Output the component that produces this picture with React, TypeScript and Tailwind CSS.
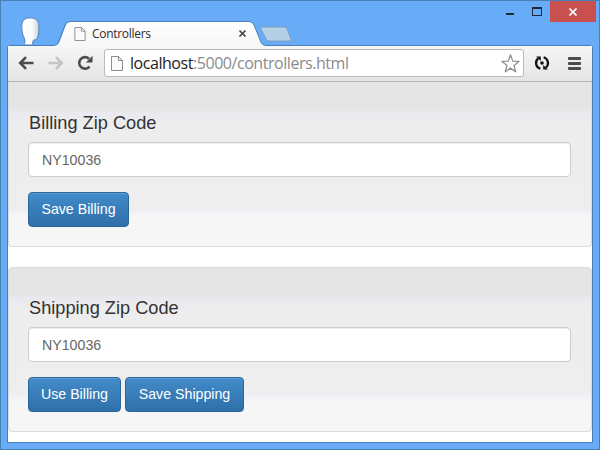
import React from "react";

function PageIcon({ className }: { className: string }) {
  return (
    <svg className={className} viewBox="0 0 12 15" fill="#fbfbfb" stroke="#8b8b8b" strokeWidth="1">
      <path d="M.5 .5H7.5L11.5 4.5V14.5H.5Z" />
      <path d="M7.5 .5V4.5H11.5" fill="none" />
    </svg>
  );
}

function TitleBar() {
  return (
    <div className="relative h-[44px] shrink-0">
      <svg className="absolute left-0 -top-px" width="600" height="46" viewBox="0 0 600 46">
        <defs>
          <linearGradient id="tab" x1="0" y1="0" x2="0" y2="1">
            <stop offset="0" stopColor="#ffffff" />
            <stop offset="1" stopColor="#f6f6f6" />
          </linearGradient>
          <linearGradient id="head" x1="0" y1="0" x2="1" y2="0">
            <stop offset="0" stopColor="#ffffff" />
            <stop offset=".6" stopColor="#fafcfd" />
            <stop offset="1" stopColor="#c9d3db" />
          </linearGradient>
        </defs>
        <path
          d="M24 45C25 43 25.200 40.500 24.500 38.500C22.500 35 21.800 31 21.800 27C21.500 21 24.500 17.800 30 17.800C36.500 17.800 39 21.500 39 27C39 32 38.500 35 37.500 37.500C36.800 39.500 35.500 40 33.800 40C32.500 40.500 32.500 42.500 33 45Z"
          fill="url(#head)"
          stroke="#5585b8"
          strokeWidth="1"
        />
        <path
          d="M261.500 27H284Q286 27 287 29L291 39Q291.500 41 289.500 41H269Q267 41 266 39L261 29Q260.500 27 261.500 27Z"
          fill="#b3d0e7"
          stroke="#7d9fc0"
          strokeWidth="1"
        />
        <path
          d="M8 46H54Q58 45.500 59.500 42L66 25Q67.500 21.500 71 21.500H249Q252.500 21.500 254 25L260.500 41Q262 45.500 266 46"
          fill="url(#tab)"
        />
        <path
          d="M9 45.500H54Q57 45.500 58.500 42L65 25Q66.500 21.500 70 21.500H249Q252.500 21.500 254 25L260.500 41Q262 45.500 266 45.500H591"
          fill="none"
          stroke="#4a7fb8"
        />
        <path d="M59 45.500H261" stroke="#f8f8f8" />
      </svg>
      <div className="relative flex h-full items-start pl-[74px]">
        <PageIcon className="mt-[26px] h-[14px] w-[12px]" />
        <span className="ml-[6px] mt-[25px] w-[147px] font-['Open_Sans',sans-serif] text-[12px] leading-[16px] tracking-[-0.300px] text-[#2b2b2b]">
          Controllers
        </span>
        <svg className="mt-[29px] h-[7px] w-[7px]" viewBox="0 0 7 7" stroke="#4c5054" strokeWidth="1.700">
          <path d="M.5 .5L6.500 6.500M6.500 .5L.5 6.500" />
        </svg>
        <div className="ml-auto mr-[4px] flex items-start">
          <span className="mt-[12px] h-[2px] w-[8px] bg-[#1d2a38]" />
          <span className="ml-[18px] mt-[6px] h-[9px] w-[10px] border border-t-2 border-[#1d2a38]" />
          <span className="ml-[8px] flex h-[21px] w-[46px] items-center justify-center bg-[#c8504f]">
            <svg className="h-[8px] w-[8px]" viewBox="0 0 8 8" stroke="#fff" strokeWidth="1.600">
              <path d="M.5 .5L7.500 7.500M7.500 .5L.5 7.500" />
            </svg>
          </span>
        </div>
      </div>
    </div>
  );
}

function Toolbar() {
  return (
    <div className="flex h-[37px] shrink-0 items-center rounded-t-[3px] border-b border-[#b5b5b5] bg-gradient-to-b from-[#f7f7f7] to-[#e4e4e4]">
      <svg className="ml-[10px] h-[14px] w-[16px]" viewBox="0 0 16 14" fill="none" stroke="#4b4b4b" strokeWidth="2.600">
        <path d="M8 1.200L2.200 7L8 12.800M2.500 7H15.500" />
      </svg>
      <svg className="ml-[14px] h-[14px] w-[16px]" viewBox="0 0 16 14" fill="none" stroke="#c3c3c3" strokeWidth="2.600">
        <path d="M8 1.200L13.800 7L8 12.800M13.500 7H.5" />
      </svg>
      <svg className="ml-[13px] h-[16px] w-[16px]" viewBox="0 0 16 16" fill="none">
        <path d="M12.500 11.600A5.800 5.800 0 1 1 12 3.700" stroke="#4b4b4b" strokeWidth="2.600" />
        <path d="M15.500 .8V7.500H8.800Z" fill="#4b4b4b" />
      </svg>
      <div className="ml-[11px] flex h-[28px] w-[420px] items-center rounded-[3px] border border-[#b9b9b9] bg-white pl-[6px] pr-[3px]">
        <PageIcon className="h-[15px] w-[12px]" />
        <span className="ml-[7px] font-['Open_Sans',sans-serif] text-[16px] leading-[24px] tracking-[-0.450px] text-[#8b8b8b]">
          <span className="text-[#222]">localhost</span>:5000/controllers.html
        </span>
        <svg className="ml-auto h-[19px] w-[19px]" viewBox="0 0 19 19" fill="#fff" stroke="#8e8e8e" strokeWidth="1.300" strokeLinejoin="round">
          <path d="M9.500 .8L11.700 7.100L18 7.400L13 11.400L14.700 17.800L9.500 14.100L4.300 17.800L6 11.400L1 7.400L7.300 7.100Z" />
        </svg>
      </div>
      <svg className="ml-[10px] h-[16px] w-[16px]" viewBox="0 0 16 16" fill="none" stroke="#111" strokeWidth="2.200">
        <path d="M6.400 13.800A6 6 0 0 1 4.200 3.400M9.600 2.200A6 6 0 0 1 11.800 12.600" />
        <path d="M2.200 1.400H6.800V6ZM13.800 14.600H9.200V10Z" fill="#111" stroke="none" />
        <circle cx="8" cy="8" r="1.800" fill="#111" stroke="none" />
      </svg>
      <div className="ml-[18px] flex flex-col gap-[2px]">
        <span className="h-[3px] w-[13px] rounded-[1px] bg-[#4b4b4b]" />
        <span className="h-[3px] w-[13px] rounded-[1px] bg-[#4b4b4b]" />
        <span className="h-[3px] w-[13px] rounded-[1px] bg-[#4b4b4b]" />
      </div>
    </div>
  );
}

function Button({ children, className }: { children: string; className: string }) {
  return (
    <button
      className={`h-[35px] whitespace-nowrap rounded-[4px] border border-[#2b669a] bg-gradient-to-b from-[#428bca] to-[#2f70a9] pb-px text-[14.200px] leading-[20px] text-white shadow-[inset_0_1px_0_rgba(255,255,255,0.15)] ${className}`}
    >
      {children}
    </button>
  );
}

function Panel({ title, className, children }: { title: string; className: string; children: React.ReactNode }) {
  return (
    <section
      className={`flex shrink-0 flex-col rounded-[4px] border border-[#dcdcdc] bg-[linear-gradient(to_bottom,#e5e5e5_0%,#e5e5e5_16%,#e9e8ee_18%,#ebebef_22%,#ededee_25%,#eeeeee_76%,#efeff5_79%,#f6f6f6_81%,#f6f6f6_100%)] px-[19px] ${className}`}
    >
      <h4 className="pl-px text-[18.200px] leading-[20px] text-[#333]">{title}</h4>
      <input
        className="mt-[9px] h-[35px] w-[543px] rounded-[4px] border border-[#cccccc] bg-white px-[13px] text-[14.200px] text-[#666] shadow-[inset_0_1px_1px_rgba(0,0,0,0.075)] outline-none"
        defaultValue="NY10036"
      />
      <div className="mt-[15px] flex gap-[4px]">{children}</div>
    </section>
  );
}

export default function App() {
  return (
    <div className="flex h-[450px] w-[600px] flex-col overflow-hidden border border-[#4680b5] bg-[#68abf7] font-['Liberation_Sans',Arial,sans-serif]">
      <div className="-ml-px -mr-px flex flex-1 flex-col">
        <TitleBar />
        <div className="mx-[7px] flex h-[398px] flex-col rounded-t-[3px] border-x border-b border-[#4a7fb8] bg-white">
          <Toolbar />
          <Panel title="Billing Zip Code" className="h-[165px] rounded-t-none border-t-0 pt-[31px]">
            <Button className="w-[101px]">Save Billing</Button>
          </Panel>
          <Panel title="Shipping Zip Code" className="mt-[20px] h-[165px] pt-[30px]">
            <Button className="w-[93px]">Use Billing</Button>
            <Button className="w-[119px]">Save Shipping</Button>
          </Panel>
        </div>
      </div>
    </div>
  );
}
